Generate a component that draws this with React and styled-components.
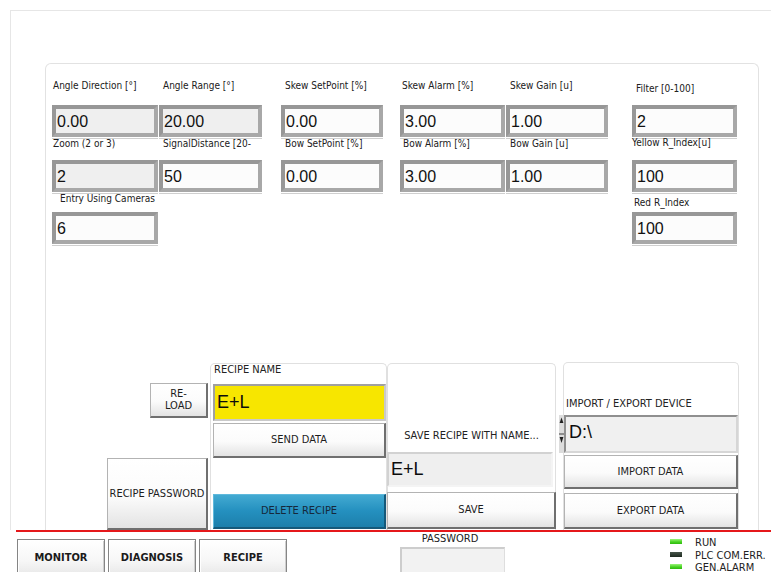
import React from "react";
import styled, { createGlobalStyle, css } from "styled-components";

const condensed = `"DejaVu Sans Condensed", "DejaVu Sans", "Liberation Sans", sans-serif`;
const plain = `"Liberation Sans", Arial, sans-serif`;

const GlobalStyle = createGlobalStyle`
  html, body { margin: 0; padding: 0; background: #ffffff; }
  body { font-family: ${condensed}; }
  *, *::before, *::after { box-sizing: border-box; }
`;

const Screen = styled.div`
  width: 771px;
  height: 572px;
  overflow: hidden;
  display: flex;
  flex-direction: column;
  background: #ffffff;
  font-family: ${condensed};
  font-stretch: condensed;
  color: #1e1e1e;
`;

/* ---------- work area ---------- */

const Workspace = styled.main`
  flex: none;
  height: 530px;
  padding: 10px 0 0 10px;
`;

const Frame = styled.div`
  height: 100%;
  border-top: 1px solid #e6e6e6;
  border-left: 1px solid #e6e6e6;
  padding: 52px 0 0 34px;
`;

const Panel = styled.section`
  width: 714px;
  height: 100%;
  border: 1px solid #e2e2e2;
  border-bottom: none;
  border-radius: 6px 6px 0 0;
  padding-left: 6px;
  display: flex;
  flex-direction: column;
`;

const ParamGrid = styled.div`
  display: grid;
  grid-template-columns: 107px 122px 119px 106px 126px 105px;
  align-items: start;
  padding-top: 15px;
`;

const Field = styled.div`
  grid-column: ${(p) => p.$col};
  grid-row: ${(p) => p.$row};
  display: flex;
  flex-direction: column;
`;

const FieldLabel = styled.div`
  height: 14px;
  line-height: ${(p) => 14 + 2 * p.$drop}px;
  width: ${(p) => p.$w}px;
  white-space: nowrap;
  font-size: 10px;
  padding-left: ${(p) => p.$indent}px;
  margin-bottom: ${(p) => p.$gap}px;
  color: #202020;
`;

const Readout = styled.div`
  width: ${(p) => p.$w}px;
  height: 32px;
  border: 4px solid #a8a8a8;
  border-top-color: #979797;
  border-left-color: #979797;
  background: ${(p) => (p.$muted ? "#efefef" : "#fcfcfc")};
  box-shadow: 0 1px 0 #ffffff, 0 2px 0 #cfcfcf;
  font-family: ${plain};
  font-size: 16px;
  line-height: 26px;
  padding-left: 1px;
  color: #111111;
  white-space: nowrap;
`;

/* ---------- recipe controls ---------- */

const Controls = styled.div`
  margin-top: auto;
  margin-left: 55px;
  height: 168px;
  display: flex;
  align-items: stretch;
`;

const SideColumn = styled.div`
  width: 101px;
  flex: none;
  display: flex;
  flex-direction: column;
  align-items: flex-end;
  padding-top: 21px;
`;

const GroupBox = styled.div`
  flex: none;
  width: ${(p) => p.$w}px;
  margin-left: ${(p) => p.$offset || 0}px;
  margin-top: ${(p) => p.$top}px;
  border: 1px solid #e0e0e0;
  border-bottom: none;
  border-radius: 5px 5px 0 0;
  display: flex;
  flex-direction: column;
  padding-left: ${(p) => p.$pad || 0}px;
  ${(p) =>
    p.$bottomUp &&
    css`
      justify-content: flex-end;
    `}
`;

const GroupTitle = styled.div`
  font-size: 11px;
  line-height: 12px;
  white-space: nowrap;
  color: #222222;
  padding-left: ${(p) => p.$indent || 0}px;
  margin-top: ${(p) => p.$top || 0}px;
  margin-bottom: ${(p) => p.$gap || 0}px;
  text-align: ${(p) => (p.$center ? "center" : "left")};
`;

const Button = styled.button`
  flex: none;
  display: flex;
  flex-direction: column;
  align-items: center;
  justify-content: center;
  width: ${(p) => (p.$w ? `${p.$w}px` : "100%")};
  height: ${(p) => p.$h}px;
  margin-top: ${(p) => (p.$push ? "auto" : `${p.$top || 0}px`)};
  margin-bottom: ${(p) => p.$bottom || 0}px;
  margin-left: ${(p) => p.$shift || 0}px;
  padding: 0;
  font-family: ${condensed};
  font-stretch: condensed;
  font-size: 11px;
  line-height: 12px;
  white-space: nowrap;
  text-align: center;
  color: #1d1d1d;
  background: linear-gradient(#ffffff, #fbfbfb 55%, #e3e3e3);
  border: 1px solid #b3b3b3;
  border-right: 2px solid #6f6f6f;
  border-bottom: 2px solid #6f6f6f;
  cursor: pointer;

  ${(p) =>
    p.$accent &&
    css`
      color: #16283a;
      background: linear-gradient(#43aad2, #2490bf 50%, #1c7fab);
      border-color: #5fb9dc;
      border-right-color: #15597a;
      border-bottom-color: #15597a;
    `}
`;

const EntryBox = styled.div`
  flex: none;
  width: ${(p) => (p.$w ? `${p.$w}px` : "100%")};
  height: ${(p) => p.$h}px;
  margin-top: ${(p) => p.$top || 0}px;
  margin-left: ${(p) => p.$shift || 0}px;
  margin-bottom: ${(p) => p.$gap || 0}px;
  display: flex;
  align-items: center;
  padding-left: 2px;
  font-family: ${plain};
  font-size: 18px;
  color: #0c0c0c;
  background: ${(p) => p.$fill};
  border: 2px solid ${(p) => p.$edge};
  border-top-color: ${(p) => p.$shade};
  border-left-color: ${(p) => p.$shade};
`;

const DeviceRow = styled.div`
  display: flex;
  height: 38px;
  margin-left: -5px;
  margin-top: 5px;
`;

const SpinnerBox = styled.div`
  flex: none;
  width: 5px;
  height: 38px;
  display: flex;
`;

const DeviceField = styled(EntryBox)`
  flex: 1;
  align-items: center;
  padding-left: 3px;
  padding-bottom: 3px;
`;

/* ---------- status bar ---------- */

const Divider = styled.div`
  flex: none;
  height: 2px;
  margin-left: 16px;
  background: #e5181b;
`;

const BottomBar = styled.footer`
  flex: none;
  height: 40px;
  display: flex;
  align-items: flex-start;
  padding-left: 17px;
`;

const Tabs = styled.nav`
  display: flex;
  gap: 3px;
  padding-top: 7px;
`;

const Tab = styled.button`
  width: 88px;
  height: 36px;
  padding: 0;
  font-family: ${condensed};
  font-stretch: condensed;
  font-weight: bold;
  font-size: 11px;
  color: #1b1b1b;
  border: 1px solid #858585;
  box-shadow: inset 1px 1px 0 #ffffff, inset -1px 0 0 #cfcfcf;
  background: linear-gradient(#ffffff, #f7f7f7 60%, #e9e9e9);
  cursor: pointer;
`;

const PasswordGroup = styled.div`
  margin-left: 113px;
  width: 105px;
  display: flex;
  flex-direction: column;
  align-items: center;
`;

const PasswordLabel = styled.span`
  font-size: 11px;
  line-height: 12px;
  margin-top: 1px;
  margin-right: 5px;
  color: #222222;
`;

const PasswordBox = styled.div`
  margin-top: 2px;
  width: 105px;
  height: 30px;
  background: #f2f2f2;
  border: 1px solid #dedede;
  border-top: 2px solid #cdcdcd;
  border-left: 2px solid #cdcdcd;
`;

const StatusList = styled.ul`
  margin: 0 0 0 165px;
  padding: 5px 0 0;
  list-style: none;
`;

const StatusItem = styled.li`
  display: flex;
  align-items: flex-start;
  height: 12.5px;
  font-size: 11px;
  line-height: 12px;
  white-space: nowrap;
  color: #222222;
`;

const Led = styled.span`
  flex: none;
  width: 12px;
  height: 5px;
  margin: 2px 13px 0 0;
  background: ${(p) =>
    p.$on
      ? "linear-gradient(#9af47a, #45d21f 60%, #2fb810)"
      : "linear-gradient(#46554a, #1e2a20)"};
`;

/* ---------- data ---------- */

const params = [
  { label: "Angle Direction [°]", value: "0.00", col: 1, row: 1, w: 106, indent: 1, muted: true },
  { label: "Angle Range [°]", value: "20.00", col: 2, row: 1, w: 103, indent: 4, muted: true },
  { label: "Skew SetPoint [%]", value: "0.00", col: 3, row: 1, w: 102, indent: 4 },
  { label: "Skew Alarm [%]", value: "3.00", col: 4, row: 1, w: 105, indent: 2 },
  { label: "Skew Gain [u]", value: "1.00", col: 5, row: 1, w: 102, indent: 4 },
  { label: "Filter [0-100]", value: "2", col: 6, row: 1, w: 105, indent: 4, drop: 3 },
  { label: "Zoom (2 or 3)", value: "2", col: 1, row: 2, w: 106, indent: 1, muted: true },
  { label: "SignalDistance [20-", value: "50", col: 2, row: 2, w: 103, indent: 4 },
  { label: "Bow SetPoint [%]", value: "0.00", col: 3, row: 2, w: 102, indent: 4 },
  { label: "Bow Alarm [%]", value: "3.00", col: 4, row: 2, w: 105, indent: 3 },
  { label: "Bow Gain [u]", value: "1.00", col: 5, row: 2, w: 102, indent: 4 },
  { label: "Yellow R_Index[u]", value: "100", col: 6, row: 2, w: 105, indent: 0, drop: -1 },
  { label: "Entry Using Cameras", value: "6", col: 1, row: 3, w: 106, indent: 8 },
  { label: "Red R_Index", value: "100", col: 6, row: 3, w: 105, indent: 2, drop: 4 },
];

const labelGap = { 1: 12, 2: 9, 3: 6 };

const statuses = [
  { name: "RUN", on: true },
  { name: "PLC COM.ERR.", on: false },
  { name: "GEN.ALARM", on: true },
];

function Spinner() {
  return (
    <SpinnerBox aria-hidden="true">
      <svg width="5" height="38" viewBox="0 0 5 38">
        <rect x="0" y="0" width="5" height="18" fill="#dcdcdc" />
        <rect x="0" y="20" width="5" height="18" fill="#dcdcdc" />
        <path d="M0.6 8 L2.5 2.5 L4.4 8 Z" fill="#1f1f1f" />
        <path d="M0.6 22 L2.5 28 L4.4 22 Z" fill="#1f1f1f" />
        <rect x="0" y="18" width="5" height="2" fill="#8d8d8d" />
      </svg>
    </SpinnerBox>
  );
}

export default function App() {
  return (
    <>
      <GlobalStyle />
      <Screen>
        <Workspace>
          <Frame>
            <Panel>
              <ParamGrid>
                {params.map((p) => (
                  <Field key={p.label} $col={p.col} $row={p.row}>
                    <FieldLabel
                      $w={p.w}
                      $indent={p.indent}
                      $drop={p.drop || 0}
                      $gap={labelGap[p.row]}
                    >
                      {p.label}
                    </FieldLabel>
                    <Readout $w={p.w} $muted={p.muted}>
                      {p.value}
                    </Readout>
                  </Field>
                ))}
              </ParamGrid>

              <Controls>
                <SideColumn>
                  <Button $w={58} $h={35}>
                    <span>RE-</span>
                    <span>LOAD</span>
                  </Button>
                  <Button $w={101} $h={72} $push>
                    RECIPE PASSWORD
                  </Button>
                </SideColumn>

                <GroupBox $w={177} $offset={2} $top={1} $pad={2}>
                  <GroupTitle $indent={1} $gap={8}>
                    RECIPE NAME
                  </GroupTitle>
                  <EntryBox $h={37} $fill="#f7e600" $edge="#c9c9c9" $shade="#a0a0a0">
                    E+L
                  </EntryBox>
                  <Button $h={35} $top={2}>
                    SEND DATA
                  </Button>
                  <Button $h={35} $push $bottom={1} $accent>
                    DELETE RECIPE
                  </Button>
                </GroupBox>

                <GroupBox $w={169} $top={1} $bottomUp>
                  <GroupTitle $center $gap={10}>
                    SAVE RECIPE WITH NAME...
                  </GroupTitle>
                  <EntryBox
                    $w={166}
                    $h={35}
                    $shift={-1}
                    $gap={5}
                    $fill="#efefef"
                    $edge="#f4f4f4"
                    $shade="#d2d2d2"
                  >
                    E+L
                  </EntryBox>
                  <Button $w={169} $h={37} $bottom={1} $shift={-1}>
                    SAVE
                  </Button>
                </GroupBox>

                <GroupBox $w={176} $offset={7} $top={0}>
                  <GroupTitle $indent={2} $top={35}>
                    IMPORT / EXPORT DEVICE
                  </GroupTitle>
                  <DeviceRow>
                    <Spinner />
                    <DeviceField $h={38} $fill="#f0f0f0" $edge="#d6d6d6" $shade="#8f8f8f">
                      D:\
                    </DeviceField>
                  </DeviceRow>
                  <Button $h={34} $top={2}>
                    IMPORT DATA
                  </Button>
                  <Button $h={36} $top={4} $bottom={1}>
                    EXPORT DATA
                  </Button>
                </GroupBox>
              </Controls>
            </Panel>
          </Frame>
        </Workspace>

        <Divider />

        <BottomBar>
          <Tabs>
            <Tab>MONITOR</Tab>
            <Tab>DIAGNOSIS</Tab>
            <Tab>RECIPE</Tab>
          </Tabs>
          <PasswordGroup>
            <PasswordLabel>PASSWORD</PasswordLabel>
            <PasswordBox />
          </PasswordGroup>
          <StatusList>
            {statuses.map((s) => (
              <StatusItem key={s.name}>
                <Led $on={s.on} />
                {s.name}
              </StatusItem>
            ))}
          </StatusList>
        </BottomBar>
      </Screen>
    </>
  );
}
